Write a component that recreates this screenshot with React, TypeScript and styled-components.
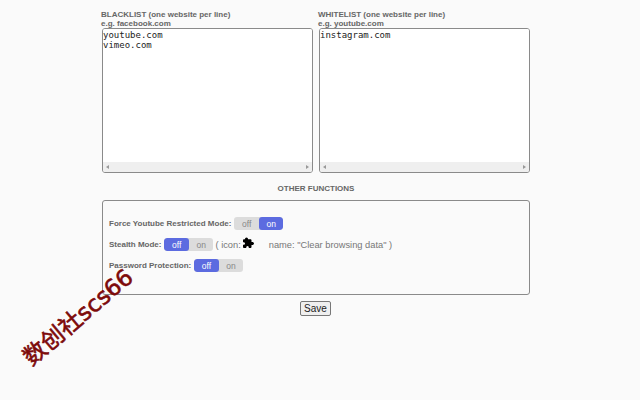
import styled, { createGlobalStyle } from 'styled-components'

const GlobalStyle = createGlobalStyle`
  html, body {
    margin: 0;
    height: 400px;
    overflow: hidden;
    background: #fafafa;
    font-family: "Liberation Sans", Arial, sans-serif;
  }
`

const Page = styled.div`
  position: relative;
  width: 640px;
  height: 400px;
  overflow: hidden;
  box-sizing: border-box;
  padding: 10px 110px 0 102px;
`

const Lists = styled.div`
  display: flex;
  gap: 6px;
`

const ListColumn = styled.div`
  width: 211px;
`

const ListLabel = styled.label`
  display: block;
  margin-left: -1px;
  font-size: 8px;
  line-height: 9px;
  font-weight: bold;
  color: #666;
`

const ListBox = styled.div`
  display: flex;
  flex-direction: column;
  height: 145px;
  box-sizing: border-box;
  border: 1px solid #8a8a8a;
  border-radius: 3px;
  background: #fff;
  overflow: hidden;
`

const ListInput = styled.textarea`
  flex: 1;
  display: block;
  border: none;
  outline: none;
  resize: none;
  overflow: hidden;
  padding: 1px 0 1px 0;
  background: #fff;
  color: #222;
  font-family: "DejaVu Sans Mono", monospace;
  font-size: 9px;
  line-height: 10px;
`

const ScrollTrack = styled.div`
  display: flex;
  align-items: center;
  justify-content: space-between;
  height: 10px;
  padding: 0 3px;
  background: #efefef;
`

const ScrollArrow = styled.span<{ $side: 'left' | 'right' }>`
  width: 0;
  height: 0;
  border-top: 2px solid transparent;
  border-bottom: 2px solid transparent;
  ${(p) => (p.$side === 'left' ? 'border-right: 3px solid #999;' : 'border-left: 3px solid #999;')}
`

const SectionTitle = styled.h2`
  margin: 11px 0 6px;
  font-size: 8px;
  line-height: 10px;
  font-weight: bold;
  text-align: center;
  color: #666;
`

const Panel = styled.div`
  display: flex;
  flex-direction: column;
  gap: 8px;
  height: 95px;
  box-sizing: border-box;
  padding: 16px 6px 0;
  border: 1px solid #8a8a8a;
  border-radius: 3px;
`

const Row = styled.div`
  display: flex;
  align-items: center;
  height: 13px;
  font-size: 9.3px;
  color: #777;
`

const RowLabel = styled.span`
  font-size: 8px;
  font-weight: bold;
  color: #666;
  margin-right: 3px;
`

const Toggle = styled.div`
  display: flex;
  width: 49px;
  height: 13px;
  border-radius: 3px;
  overflow: hidden;
  background: #dcdcdc;
`

const ToggleOption = styled.span<{ $active?: boolean }>`
  flex: 1;
  display: flex;
  align-items: center;
  justify-content: center;
  font-size: 8.5px;
  color: ${(p) => (p.$active ? '#fff' : '#888')};
  background: ${(p) => (p.$active ? '#5c6be0' : 'transparent')};
  border-radius: ${(p) => (p.$active ? '3px' : '0')};
`

const IconNote = styled.span`
  margin-left: 2px;
`

const PuzzleIcon = styled.svg`
  width: 12px;
  height: 12px;
  margin: 0 15px 3px 1px;
`

const SaveRow = styled.div`
  display: flex;
  justify-content: center;
  margin-top: 6px;
`

const SaveButton = styled.button`
  width: 31px;
  height: 15px;
  margin-right: 1px;
  padding: 0;
  box-sizing: border-box;
  border: 1px solid #777;
  border-radius: 2px;
  background: #efefef;
  color: #222;
  font-family: "Liberation Sans", Arial, sans-serif;
  font-size: 10px;
  line-height: 12px;
`

const Watermark = styled.div`
  position: absolute;
  left: 1px;
  top: 304px;
  width: 154px;
  text-align: center;
  transform: rotate(-40deg);
  white-space: nowrap;
  font-family: "DejaVu Sans", "Noto Sans CJK SC", sans-serif;
  font-size: 23px;
  line-height: 26px;
  font-weight: normal;
  -webkit-text-stroke: 0.6px #7d0a0a;
  color: #7d0a0a;
`

function ListField({ title, hint, value }: { title: string; hint: string; value: string }) {
  return (
    <ListColumn>
      <ListLabel>{title}</ListLabel>
      <ListLabel>{hint}</ListLabel>
      <ListBox>
        <ListInput wrap="off" defaultValue={value} />
        <ScrollTrack>
          <ScrollArrow $side="left" />
          <ScrollArrow $side="right" />
        </ScrollTrack>
      </ListBox>
    </ListColumn>
  )
}

function OffOn({ on }: { on: boolean }) {
  return (
    <Toggle>
      <ToggleOption $active={!on}>off</ToggleOption>
      <ToggleOption $active={on}>on</ToggleOption>
    </Toggle>
  )
}

export default function App() {
  return (
    <Page>
      <GlobalStyle />
      <Lists>
        <ListField title="BLACKLIST (one website per line)" hint="e.g. facebook.com" value={'youtube.com\nvimeo.com'} />
        <ListField title="WHITELIST (one website per line)" hint="e.g. youtube.com" value="instagram.com" />
      </Lists>
      <SectionTitle>OTHER FUNCTIONS</SectionTitle>
      <Panel>
        <Row>
          <RowLabel>Force Youtube Restricted Mode:</RowLabel>
          <OffOn on />
        </Row>
        <Row>
          <RowLabel>Stealth Mode:</RowLabel>
          <OffOn on={false} />
          <IconNote>( icon:</IconNote>
          <PuzzleIcon viewBox="0 0 24 24">
            <path d="M9 1c2 0 3 1.500 3 3.500h5c1 0 2 1 2 2v3.500c3-.5 5 1 5 3s-2 3.500-5 3v4c0 1-1 2-2 2h-3.500c.5-2.500-1-4-2.500-4s-3 1.500-2.500 4H4c-1 0-2-1-2-2v-4.500c2.500.5 4-1 4-2.500s-1.500-3-4-2.500V6.500c0-1 1-2 2-2h2C6 2.500 7 1 9 1z" fill="#000" />
          </PuzzleIcon>
          <span>name: "Clear browsing data" )</span>
        </Row>
        <Row>
          <RowLabel>Password Protection:</RowLabel>
          <OffOn on={false} />
        </Row>
      </Panel>
      <SaveRow>
        <SaveButton>Save</SaveButton>
      </SaveRow>
      <Watermark>数创社scs66</Watermark>
    </Page>
  )
}
